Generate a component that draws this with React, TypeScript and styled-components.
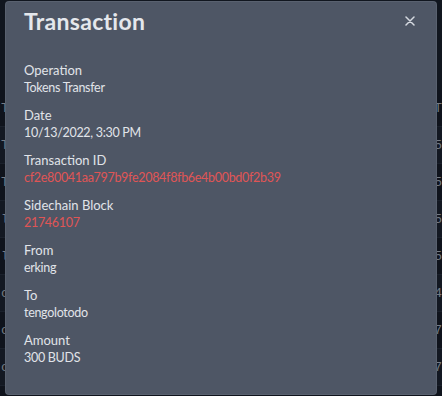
import React from "react";
import styled, { createGlobalStyle } from "styled-components";

const Global = createGlobalStyle`
  html, body { margin: 0; padding: 0; background: #141a25; overflow: hidden; }
  body { font-family: "Lato", "Open Sans", sans-serif; }
`;

const Page = styled.div`
  position: relative;
  width: 442px;
  height: 396px;
  overflow: hidden;
  background: #141a25;
`;

const Table = styled.div`
  display: flex;
  flex-direction: column;
  padding-top: 90px;
`;

const Row = styled.div<{ $alt?: boolean }>`
  height: 36px;
  display: flex;
  justify-content: space-between;
  align-items: center;
  border-bottom: 1px solid #1f2633;
  background: ${(p) => (p.$alt ? "#171d29" : "#121722")};
  color: #8a919c;
  font-family: "Liberation Mono", monospace;
  font-size: 13px;
  padding: 0 0 0 1px;
`;

const Backdrop = styled.div`
  position: absolute;
  inset: 0;
  background: rgba(0, 0, 0, 0.15);
`;

const Modal = styled.div`
  position: absolute;
  left: 6px;
  top: 2px;
  width: 430px;
  height: 392px;
  background: #4e5665;
  border-radius: 3px;
  box-shadow: 0 0 0 1px #59616f;
  display: flex;
  flex-direction: column;
`;

const Header = styled.div`
  display: flex;
  justify-content: space-between;
  align-items: center;
  padding: 0 18px;
  height: 38px;
`;

const Title = styled.h2`
  margin: 0;
  font-family: "Lato", sans-serif;
  font-size: 23px;
  font-weight: 700;
  color: #e4e7ec;
  letter-spacing: 0.3px;
`;

const Close = styled.button`
  background: none;
  border: none;
  padding: 0;
  margin-right: 2px;
  width: 12px;
  height: 12px;
  display: flex;
  align-items: center;
  justify-content: center;
  cursor: pointer;
`;

const Body = styled.div`
  display: flex;
  flex-direction: column;
  gap: 9px;
  padding: 21px 18px 0 18px;
`;

const Field = styled.div`
  display: flex;
  flex-direction: column;
`;

const Label = styled.div`
  font-size: 13px;
  line-height: 18px;
  color: #e1e4e9;
`;

const Value = styled.div<{ $red?: boolean }>`
  font-size: 12.5px;
  line-height: 18px;
  letter-spacing: -0.3px;
  color: ${(p) => (p.$red ? "#e05555" : "#e1e4e9")};
`;

const rows = ["T T", "T )5", "T )5", "l: )5", "l: )5", "o !4", "o 7", "o 7", " "];

const fields: { label: string; value: string; red?: boolean }[] = [
  { label: "Operation", value: "Tokens Transfer" },
  { label: "Date", value: "10/13/2022, 3:30 PM" },
  { label: "Transaction ID", value: "cf2e80041aa797b9fe2084f8fb6e4b00bd0f2b39", red: true },
  { label: "Sidechain Block", value: "21746107", red: true },
  { label: "From", value: "erking" },
  { label: "To", value: "tengolotodo" },
  { label: "Amount", value: "300 BUDS" },
];

export default function App() {
  return (
    <Page>
      <Global />
      <Table>
        {rows.map((r, i) => {
          const [a, b] = r.split(" ");
          return (
            <Row key={i} $alt={i % 2 === 1}>
              <span>{a}</span>
              <span>{b}</span>
            </Row>
          );
        })}
      </Table>
      <Backdrop />
      <Modal>
        <Header>
          <Title>Transaction</Title>
          <Close aria-label="Close">
            <svg width="10" height="10" viewBox="0 0 10 10">
              <path d="M1 1L9 9M9 1L1 9" stroke="#d5d9e0" strokeWidth="1.5" strokeLinecap="round" />
            </svg>
          </Close>
        </Header>
        <Body>
          {fields.map((f) => (
            <Field key={f.label}>
              <Label>{f.label}</Label>
              <Value $red={f.red}>{f.value}</Value>
            </Field>
          ))}
        </Body>
      </Modal>
    </Page>
  );
}
